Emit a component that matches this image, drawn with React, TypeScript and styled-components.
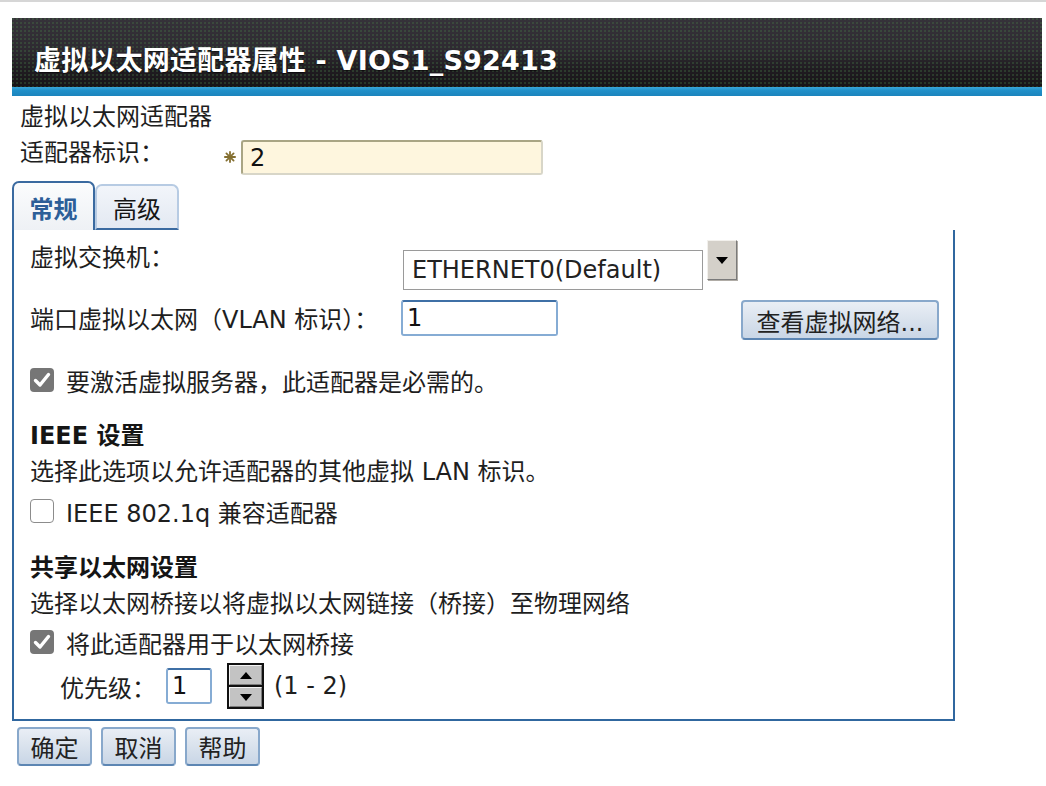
import React from 'react';
import styled, { createGlobalStyle } from 'styled-components';

const GlobalStyle = createGlobalStyle`
  *, *::before, *::after { box-sizing: border-box; }
  html, body { margin: 0; padding: 0; background: #ffffff; }
  body {
    font-family: "DejaVu Sans", "Noto Sans CJK SC", sans-serif;
    font-size: 24px;
    color: #1e1e1e;
  }
`;

const TopRule = styled.div`
  height: 2px;
  background: #d6d6d6;
`;

const Page = styled.div`
  padding: 16px 4px 20px 12px;
`;

const HeaderWrap = styled.header`
  display: flex;
  flex-direction: column;
`;

const TitleBar = styled.div`
  height: 69px;
  display: flex;
  align-items: center;
  padding: 11px 0 0 22px;
  background-color: #29252b;
  background-image:
    radial-gradient(circle at 1px 1px, rgba(70, 120, 70, 0.35) 0.8px, transparent 1.2px),
    linear-gradient(180deg, #36323a 0%, #2e2a31 45%, #201c21 75%, #171417 100%);
  background-size: 4px 4px, 100% 100%;
`;

const Title = styled.h1`
  margin: 0;
  font-size: 27px;
  font-weight: bold;
  color: #ffffff;
  letter-spacing: 0.2px;
  text-shadow: 0 1px 1px rgba(0, 0, 0, 0.6);
`;

const Stripe = styled.div`
  height: 9px;
  background: linear-gradient(180deg, #3aa6da 0%, #1f8fc8 40%, #1b84bd 100%);
`;

const Info = styled.section`
  padding: 4px 0 0 8px;
`;

const InfoLine = styled.div`
  height: 34px;
  line-height: 34px;
`;

const IdRow = styled.div`
  display: flex;
  align-items: flex-start;
  margin-top: 4px;
`;

const IdLabel = styled.div`
  width: 204px;
  line-height: 30px;
`;

const Required = styled.span`
  width: 17px;
  display: flex;
  justify-content: flex-start;
  padding: 13px 0 0 0;
`;

const IdInput = styled.input`
  width: 302px;
  height: 35px;
  margin: 2px 0 0 0;
  padding: 0 0 0 7px;
  background: #fef6de;
  border: 2px solid;
  border-color: #a9a584 #d8d6c8 #d8d6c8 #a9a584;
  border-radius: 3px;
  font: inherit;
  color: #111;
  outline: none;
`;

const TabBar = styled.div`
  display: flex;
  align-items: flex-end;
  margin-top: 6px;
`;

const Tab = styled.div<{ $active?: boolean }>`
  height: ${(p) => (p.$active ? '49px' : '46px')};
  width: ${(p) => (p.$active ? '83px' : '84px')};
  display: flex;
  align-items: center;
  justify-content: center;
  padding-top: ${(p) => (p.$active ? '2px' : '0')};
  border-radius: 7px 7px 0 0;
  border-style: solid;
  border-width: ${(p) => (p.$active ? '2px 2px 0 2px' : '2px 2px 2px 2px')};
  border-color: ${(p) =>
    p.$active ? '#3a6aa0' : '#b7cbe3 #b7cbe3 #3a6aa0 #b7cbe3'};
  background: ${(p) =>
    p.$active
      ? 'linear-gradient(180deg, #fbfcfd 0%, #eef1f5 100%)'
      : 'linear-gradient(180deg, #f2f5fa 0%, #e3e9f2 100%)'};
  color: ${(p) => (p.$active ? '#2c5e98' : '#151515')};
  font-weight: ${(p) => (p.$active ? 'bold' : 'normal')};
`;

const Panel = styled.section`
  width: 943px;
  border: 2px solid #30679f;
  border-top: none;
  padding: 10px 14px 10px 16px;
`;

const FieldRow = styled.div<{ $gap?: number }>`
  display: flex;
  align-items: flex-start;
  margin-top: ${(p) => p.$gap ?? 0}px;
`;

const FieldLabel = styled.div<{ $offset?: number }>`
  width: 371px;
  line-height: 36px;
  margin-top: ${(p) => p.$offset ?? 0}px;
`;

const SelectBox = styled.div`
  width: 300px;
  height: 40px;
  margin: 10px 0 0 2px;
  padding-left: 8px;
  border: 1px solid #9a9a9a;
  line-height: 38px;
  color: #222;
  background: #fff;
`;

const DropButton = styled.div`
  width: 30px;
  height: 40px;
  margin-left: 4px;
  display: flex;
  align-items: center;
  justify-content: center;
  background: #d4d0c9;
  border: 1px solid;
  border-color: #f2f0ec #7a7a7a #7a7a7a #f2f0ec;
  box-shadow: 1px 1px 0 #b0aca6;
`;

const TextInput = styled.input<{ $w: number }>`
  width: ${(p) => p.$w}px;
  height: 36px;
  margin: 0;
  padding: 0 0 0 4px;
  border: 2px solid #86acd4;
  border-top-color: #3f70a6;
  border-radius: 3px;
  font: inherit;
  color: #111;
  background: #fff;
  outline: none;
`;

const Spacer = styled.div`
  flex: 1;
`;

const ActionButton = styled.button<{ $w: number }>`
  width: ${(p) => p.$w}px;
  height: ${(p) => (p.$w > 100 ? 40 : 39)}px;
  padding: 0;
  border: 2px solid #88a8cb;
  border-bottom-color: #5d86b3;
  border-radius: 4px;
  background: linear-gradient(180deg, #e9eef5 0%, #d9e2ed 50%, #c9d6e6 100%);
  font: inherit;
  color: #222;
  cursor: pointer;
`;

const CheckRow = styled.label<{ $gap: number }>`
  display: flex;
  align-items: center;
  gap: 12px;
  height: 36px;
  margin-top: ${(p) => p.$gap}px;
`;

const Box = styled.span<{ $checked?: boolean }>`
  width: 24px;
  height: 24px;
  border-radius: 4px;
  display: flex;
  align-items: center;
  justify-content: center;
  background: ${(p) => (p.$checked ? '#767676' : '#ffffff')};
  border: ${(p) => (p.$checked ? 'none' : '1.5px solid #8c8c8c')};
`;

const Heading = styled.div<{ $gap: number }>`
  font-weight: bold;
  line-height: 36px;
  margin-top: ${(p) => p.$gap}px;
  color: #151515;
`;

const Desc = styled.div`
  line-height: 36px;
`;

const PriorityRow = styled.div`
  display: flex;
  align-items: center;
  height: 46px;
  margin-top: 3px;
  padding-left: 30px;
`;

const PriorityLabel = styled.span`
  width: 106px;
`;

const Spinner = styled.div`
  width: 37px;
  height: 46px;
  margin-left: 15px;
  border: 2px solid #111;
  display: flex;
  flex-direction: column;
  background: #111;
  gap: 2px;
`;

const SpinHalf = styled.div`
  flex: 1;
  display: flex;
  align-items: center;
  justify-content: center;
  background: #c3c3c3;
  border: 1px solid;
  border-color: #f4f4f4 #7c7c7c #7c7c7c #f4f4f4;
`;

const Range = styled.span`
  margin-left: 10px;
`;

const ButtonBar = styled.div`
  display: flex;
  gap: 9px;
  margin: 6px 0 0 5px;
`;

const Check = () => (
  <svg width="18" height="16" viewBox="0 0 18 16">
    <path d="M2.5 8.5 L7 13 L15.5 2.5" fill="none" stroke="#fff" strokeWidth="3.4" strokeLinecap="round" strokeLinejoin="round" />
  </svg>
);

const Star = () => (
  <svg width="12" height="12" viewBox="0 0 12 12">
    <g stroke="#857032" strokeWidth="1.8" strokeLinecap="round">
      <line x1="6" y1="0.9" x2="6" y2="11.1" />
      <line x1="0.9" y1="6" x2="11.1" y2="6" />
      <line x1="2.4" y1="2.4" x2="9.6" y2="9.6" />
      <line x1="9.6" y1="2.4" x2="2.4" y2="9.6" />
    </g>
  </svg>
);

const Tri = ({ up }: { up?: boolean }) => (
  <svg width="12" height="7" viewBox="0 0 12 7">
    <path d={up ? 'M0 7 L6 0 L12 7 Z' : 'M0 0 L12 0 L6 7 Z'} fill="#000" />
  </svg>
);

export default function App() {
  return (
    <>
      <GlobalStyle />
      <TopRule />
      <Page>
        <HeaderWrap>
          <TitleBar>
            <Title>虚拟以太网适配器属性 - VIOS1_S92413</Title>
          </TitleBar>
          <Stripe />
        </HeaderWrap>

        <Info>
          <InfoLine>虚拟以太网适配器</InfoLine>
          <IdRow>
            <IdLabel>适配器标识：</IdLabel>
            <Required>
              <Star />
            </Required>
            <IdInput readOnly value="2" />
          </IdRow>
        </Info>

        <TabBar>
          <Tab $active>常规</Tab>
          <Tab>高级</Tab>
        </TabBar>

        <Panel>
          <FieldRow>
            <FieldLabel>虚拟交换机：</FieldLabel>
            <SelectBox>ETHERNET0(Default)</SelectBox>
            <DropButton>
              <Tri />
            </DropButton>
          </FieldRow>
          <FieldRow $gap={10}>
            <FieldLabel $offset={2}>端口虚拟以太网（VLAN 标识）：</FieldLabel>
            <TextInput $w={157} readOnly value="1" />
            <Spacer />
            <ActionButton $w={198}>查看虚拟网络...</ActionButton>
          </FieldRow>

          <CheckRow $gap={22}>
            <Box $checked>
              <Check />
            </Box>
            要激活虚拟服务器，此适配器是必需的。
          </CheckRow>

          <Heading $gap={20}>IEEE 设置</Heading>
          <Desc>选择此选项以允许适配器的其他虚拟 LAN 标识。</Desc>
          <CheckRow $gap={3}>
            <Box />
            IEEE 802.1q 兼容适配器
          </CheckRow>

          <Heading $gap={21}>共享以太网设置</Heading>
          <Desc>选择以太网桥接以将虚拟以太网链接（桥接）至物理网络</Desc>
          <CheckRow $gap={2}>
            <Box $checked>
              <Check />
            </Box>
            将此适配器用于以太网桥接
          </CheckRow>
          <PriorityRow>
            <PriorityLabel>优先级：</PriorityLabel>
            <TextInput $w={46} readOnly value="1" />
            <Spinner>
              <SpinHalf>
                <Tri up />
              </SpinHalf>
              <SpinHalf>
                <Tri />
              </SpinHalf>
            </Spinner>
            <Range>(1 - 2)</Range>
          </PriorityRow>
        </Panel>

        <ButtonBar>
          <ActionButton $w={75}>确定</ActionButton>
          <ActionButton $w={75}>取消</ActionButton>
          <ActionButton $w={75}>帮助</ActionButton>
        </ButtonBar>
      </Page>
    </>
  );
}
